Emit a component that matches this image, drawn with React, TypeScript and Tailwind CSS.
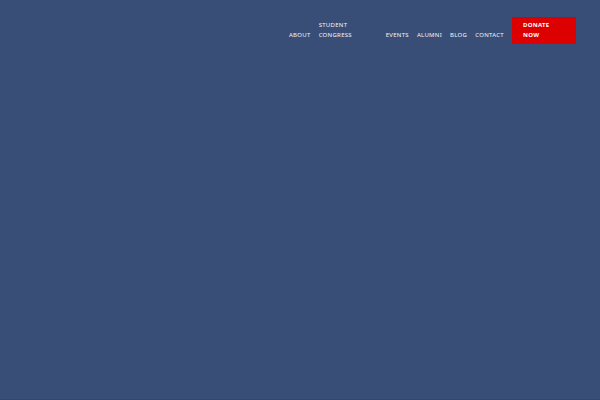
const links = [
  { label: "About", href: "#about" },
  { label: "Student Congress", href: "#student-congress", className: "w-[59px]" },
  { label: "Events", href: "#events" },
  { label: "Alumni", href: "#alumni" },
  { label: "Blog", href: "#blog" },
  { label: "Contact", href: "#contact" },
];

export default function App() {
  return (
    <div className="flex min-h-screen flex-col border-b border-[#34466b] bg-[#394e77] font-['Noto_Sans',sans-serif]">
      <header className="flex justify-end px-6 py-[17px]">
        <nav
          aria-label="Main"
          className="flex items-end gap-2 text-[6px] leading-[10px] tracking-wider text-gray-100 uppercase"
        >
          {links.map((link) => (
            <a key={link.label} href={link.href} className={`pb-1 hover:underline ${link.className ?? ""}`}>
              {link.label}
            </a>
          ))}
          <a
            href="#donate"
            className="w-16 bg-[#dd0000] pt-[3px] pr-6 pb-1 pl-[11px] font-bold text-white hover:bg-[#bb0000]"
          >
            Donate Now
          </a>
        </nav>
      </header>
    </div>
  );
}
